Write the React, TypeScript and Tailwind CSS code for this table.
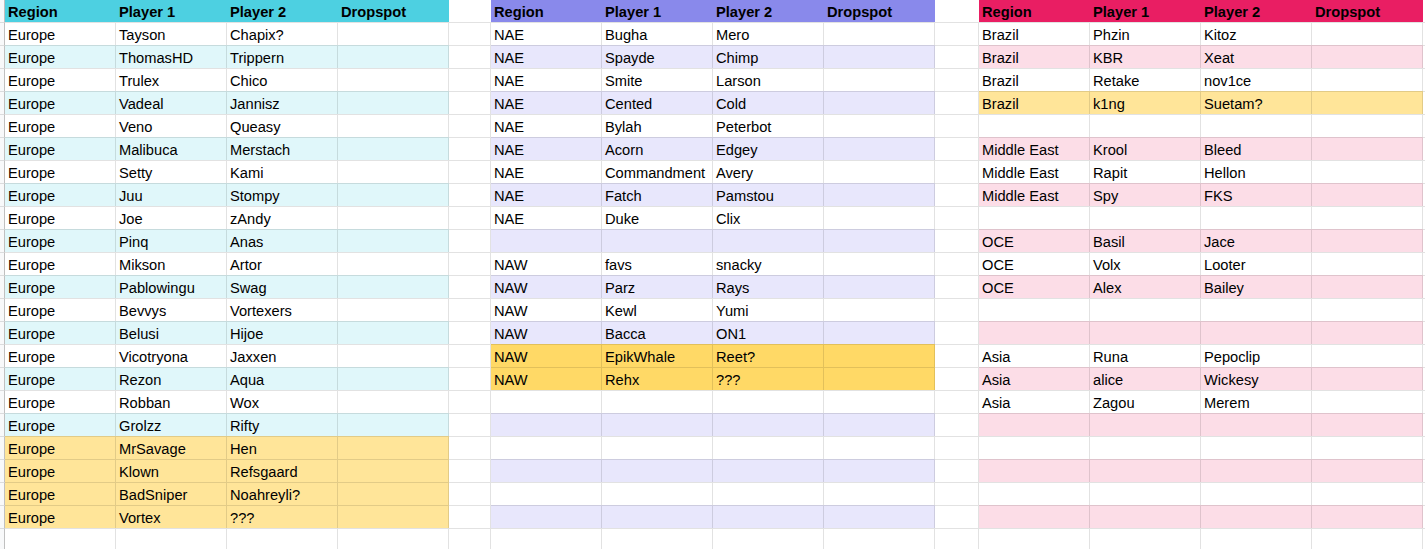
import React from "react";

type Row = [string, string, string, string];

const W = "";
const CY = "bg-[#e0f7fa]";
const LV = "bg-[#e8e7fc]";
const PK = "bg-[#fcdde7]";
const Y1 = "bg-[#ffe599]";
const Y2 = "bg-[#ffd966]";

const europe: Row[] = [
  ["Europe", "Tayson", "Chapix?", W],
  ["Europe", "ThomasHD", "Trippern", CY],
  ["Europe", "Trulex", "Chico", W],
  ["Europe", "Vadeal", "Jannisz", CY],
  ["Europe", "Veno", "Queasy", W],
  ["Europe", "Malibuca", "Merstach", CY],
  ["Europe", "Setty", "Kami", W],
  ["Europe", "Juu", "Stompy", CY],
  ["Europe", "Joe", "zAndy", W],
  ["Europe", "Pinq", "Anas", CY],
  ["Europe", "Mikson", "Artor", W],
  ["Europe", "Pablowingu", "Swag", CY],
  ["Europe", "Bevvys", "Vortexers", W],
  ["Europe", "Belusi", "Hijoe", CY],
  ["Europe", "Vicotryona", "Jaxxen", W],
  ["Europe", "Rezon", "Aqua", CY],
  ["Europe", "Robban", "Wox", W],
  ["Europe", "Grolzz", "Rifty", CY],
  ["Europe", "MrSavage", "Hen", Y1],
  ["Europe", "Klown", "Refsgaard", Y1],
  ["Europe", "BadSniper", "Noahreyli?", Y1],
  ["Europe", "Vortex", "???", Y1],
  ["", "", "", W],
  ["", "", "", W],
];

const na: Row[] = [
  ["NAE", "Bugha", "Mero", W],
  ["NAE", "Spayde", "Chimp", LV],
  ["NAE", "Smite", "Larson", W],
  ["NAE", "Cented", "Cold", LV],
  ["NAE", "Bylah", "Peterbot", W],
  ["NAE", "Acorn", "Edgey", LV],
  ["NAE", "Commandment", "Avery", W],
  ["NAE", "Fatch", "Pamstou", LV],
  ["NAE", "Duke", "Clix", W],
  ["", "", "", LV],
  ["NAW", "favs", "snacky", W],
  ["NAW", "Parz", "Rays", LV],
  ["NAW", "Kewl", "Yumi", W],
  ["NAW", "Bacca", "ON1", LV],
  ["NAW", "EpikWhale", "Reet?", Y2],
  ["NAW", "Rehx", "???", Y2],
  ["", "", "", W],
  ["", "", "", LV],
  ["", "", "", W],
  ["", "", "", LV],
  ["", "", "", W],
  ["", "", "", LV],
  ["", "", "", W],
  ["", "", "", W],
];

const rest: Row[] = [
  ["Brazil", "Phzin", "Kitoz", W],
  ["Brazil", "KBR", "Xeat", PK],
  ["Brazil", "Retake", "nov1ce", W],
  ["Brazil", "k1ng", "Suetam?", Y1],
  ["", "", "", W],
  ["Middle East", "Krool", "Bleed", PK],
  ["Middle East", "Rapit", "Hellon", W],
  ["Middle East", "Spy", "FKS", PK],
  ["", "", "", W],
  ["OCE", "Basil", "Jace", PK],
  ["OCE", "Volx", "Looter", W],
  ["OCE", "Alex", "Bailey", PK],
  ["", "", "", W],
  ["", "", "", PK],
  ["Asia", "Runa", "Pepoclip", W],
  ["Asia", "alice", "Wickesy", PK],
  ["Asia", "Zagou", "Merem", W],
  ["", "", "", PK],
  ["", "", "", W],
  ["", "", "", PK],
  ["", "", "", W],
  ["", "", "", PK],
  ["", "", "", W],
  ["", "", "", W],
];

const CELL =
  "h-[23px] shrink-0 border-t border-r border-[rgba(0,0,0,0.114)] pl-[3px] pt-[2px] leading-[20px] whitespace-nowrap overflow-hidden";
const HEAD =
  "h-[22px] w-[111px] shrink-0 pl-[3px] pt-[2px] leading-[20px] font-bold whitespace-nowrap overflow-hidden";

function Header({ bg }: { bg: string }) {
  return (
    <>
      <div className={`${HEAD} ${bg}`}>Region</div>
      <div className={`${HEAD} ${bg}`}>Player 1</div>
      <div className={`${HEAD} ${bg}`}>Player 2</div>
      <div className={`${HEAD} ${bg}`}>Dropspot</div>
    </>
  );
}

function Cells({ row }: { row: Row }) {
  const bg = row[3];
  return (
    <>
      <div className={`${CELL} w-[111px] ${bg}`}>{row[0]}</div>
      <div className={`${CELL} w-[111px] ${bg}`}>{row[1]}</div>
      <div className={`${CELL} w-[111px] ${bg}`}>{row[2]}</div>
      <div className={`${CELL} w-[111px] ${bg}`}></div>
    </>
  );
}

export default function App() {
  return (
    <div className="h-[549px] w-[1425px] overflow-hidden bg-white text-black text-[14.67px] font-['Liberation_Sans',Arial,sans-serif]">
      <div className="flex h-[22px]">
        <div className="h-[22px] w-[5px] shrink-0 bg-[#f8f9fa] border-r border-[#c0c0c0]"></div>
        <Header bg="bg-[#4dd0e1]" />
        <div className="h-[22px] w-[42px] shrink-0"></div>
        <Header bg="bg-[#8989eb]" />
        <div className="h-[22px] w-[44px] shrink-0"></div>
        <Header bg="bg-[#e91e63]" />
        <div className="h-[22px] w-[111px] shrink-0"></div>
      </div>
      {europe.map((r, i) => (
        <div key={i} className="flex h-[23px]">
          <div className="h-[23px] w-[5px] shrink-0 bg-[#f8f9fa] border-t border-t-[rgba(0,0,0,0.114)] border-r border-r-[#c0c0c0]"></div>
          <Cells row={r} />
          <div className={`${CELL} w-[42px]`}></div>
          <Cells row={na[i]} />
          <div className={`${CELL} w-[44px]`}></div>
          <Cells row={rest[i]} />
          <div className={`${CELL} w-[111px]`}></div>
        </div>
      ))}
    </div>
  );
}
